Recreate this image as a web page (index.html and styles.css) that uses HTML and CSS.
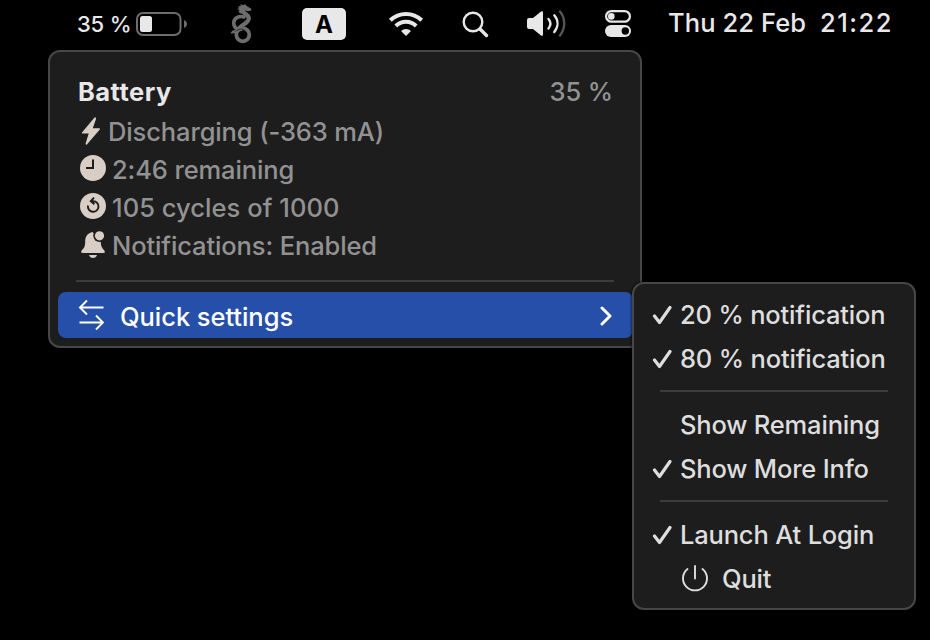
FILE: index.html
```html
<!DOCTYPE html>
<html lang="en">
<head>
<meta charset="utf-8">
<title>Battery</title>
<link rel="stylesheet" href="styles.css">
</head>
<body>
<header class="menubar">
  <span class="percent">35 %</span>
  <svg class="battery" viewBox="0 0 54 26"><rect x="2" y="1" width="43.5" height="22" rx="6" fill="none" stroke="#6d6d6d" stroke-width="2"/><rect x="5" y="4" width="12" height="16" rx="2.5" fill="#e8e8e8"/><path d="M49 8v8c4-1.500 4-6.500 0-8z" fill="#6d6d6d"/></svg>
  <svg class="dragon" viewBox="0 0 24 42"><g fill="none" stroke="#6d6d6d" stroke-linecap="round"><path d="M13 6c-3 4 6 4.500 5.800 9.500C18.500 20 12 21.500 8.500 26" stroke-width="4.200"/><path d="M14 14C9 12.500 3.700 15 3.700 20c0 4.500 3.300 6.300 7 6.500" stroke-width="3.600"/><circle cx="12.800" cy="31.800" r="6.500" stroke-width="3.800"/></g><path d="M8 3.500l3-.5-1-1.800 3.500.8 2-.8.8 1.500L21 5.500l.3 2-3.300.8-3-.8-1 2-4 1-1.500-2 1-1.500-2.500-1 2-.7zM.3 30.500l2-2.700 5-1.500-2.500 4z" fill="#6d6d6d"/><path d="M5.500 28.500c3-3 7-2.800 9.500-1" fill="none" stroke="#111" stroke-width=".7"/></svg>
  <span class="input-source">A</span>
  <svg class="wifi" viewBox="0 0 36 28"><g fill="none" stroke="#e8e8e8" stroke-width="4"><path d="M2.300 10.300a22.500 22.500 0 0 1 31.400 0"/><path d="M7.800 16a14.500 14.500 0 0 1 20.400 0"/></g><path d="M18 26l-5-5a7.400 7.400 0 0 1 10 0z" fill="#e8e8e8"/></svg>
  <svg class="search" viewBox="0 0 28 28"><circle cx="11" cy="11" r="9.300" fill="none" stroke="#e8e8e8" stroke-width="2.400"/><path d="M18 18l6.500 6.500" stroke="#e8e8e8" stroke-width="3.400" stroke-linecap="round"/></svg>
  <svg class="volume" viewBox="0 0 40 28"><path d="M1 10q0-2 2-2h4l8-6.500q2-1 2 1v22q0 2-2 1L7 19H3q-2 0-2-2z" fill="#e8e8e8"/><g fill="none" stroke-width="2.400" stroke-linecap="round"><path d="M22.500 9c2.400 3 2.400 6.500 0 9.500M28.300 5.300c4.200 5 4.200 11.500 0 16.700" stroke="#e8e8e8"/><path d="M34 1.500c5.600 7 5.600 17 0 24" stroke="#555"/></g></svg>
  <svg class="controls" viewBox="0 0 28 28"><rect x="2.100" y="2.100" width="23.800" height="10.600" rx="5.300" fill="none" stroke="#e8e8e8" stroke-width="2.200"/><circle cx="7.300" cy="7.400" r="3.300" fill="#e8e8e8"/><rect x="1" y="16" width="26" height="12" rx="6" fill="#e8e8e8"/><circle cx="21.300" cy="22" r="3.700" fill="#000"/></svg>
  <time class="clock"><span class="date">Thu 22 Feb</span><span class="time">21:22</span></time>
</header>
<main class="panel">
  <div class="title"><strong>Battery</strong><span class="level">35 %</span></div>
  <ul class="info">
    <li><svg class="bolt" viewBox="0 0 28 32"><path d="M14.500 1.500L2 16.500q-.5 1 .5 1h6.200L5.600 27.500q0 2 1.500.7L19.800 13.500q.6-1.300-.6-1.300h-6.400L16 3q0-2.600-1.500-1.500z" fill="#d8cec6"/></svg><span>Discharging (-363 mA)</span></li>
    <li><svg viewBox="0 0 32 32"><circle cx="13" cy="14" r="13" fill="#d8cec6"/><path d="M13 5.500V14H6" fill="none" stroke="#1d1d1d" stroke-width="2"/></svg><span>2:46 remaining</span></li>
    <li><svg viewBox="0 0 32 32"><circle cx="13" cy="14" r="13" fill="#d8cec6"/><path d="M8 13.500a5.300 5.300 0 1 0 5.300-4.300h-1.500M14 5.600l-3.200 3.600 3.600 3" fill="none" stroke="#1d1d1d" stroke-width="1.900"/></svg><span class="cycles">105 cycles of 1000</span></li>
    <li><svg viewBox="0 0 32 32"><path d="M12.500 2C8 3 5.200 6 5.200 11c0 6-1.200 7-3.500 9.500q-1.500 2.500 1 2.500h20.600q2.500 0 1-2.500C22 18 20.800 16 20.800 12zM9 25h8c-1 4-7 4-8 0z" fill="#d8cec6"/><circle cx="19.500" cy="5.800" r="6.200" fill="#1d1d1d"/><circle cx="19.500" cy="5.800" r="4.600" fill="#d8cec6"/></svg><span>Notifications: Enabled</span></li>
  </ul>
  <hr>
  <div class="quick"><svg class="swap" viewBox="0 0 26 32"><path d="M25.500 9.500H2M9 2.500l-7 7 7 7M1.500 24.500H25M18 17.500l7 7-7 7" fill="none" stroke="#fff" stroke-width="1.900"/></svg><span>Quick settings</span><svg class="chevron" viewBox="0 0 12 20"><path d="M2 2l8 8-8 8" fill="none" stroke="#fff" stroke-width="3" stroke-linecap="round" stroke-linejoin="round"/></svg></div>
</main>
<nav class="submenu">
  <div class="item checked"><svg class="check" viewBox="0 0 20 20"><path d="M2.500 11l5 6.500L18 2.500" /></svg><span>20 % notification</span></div>
  <div class="item checked"><svg class="check" viewBox="0 0 20 20"><path d="M2.500 11l5 6.500L18 2.500" /></svg><span>80 % notification</span></div>
  <hr>
  <div class="item"><span>Show Remaining</span></div>
  <div class="item checked"><svg class="check" viewBox="0 0 20 20"><path d="M2.500 11l5 6.500L18 2.500" /></svg><span>Show More Info</span></div>
  <hr>
  <div class="item checked"><svg class="check" viewBox="0 0 20 20"><path d="M2.500 11l5 6.500L18 2.500" /></svg><span>Launch At Login</span></div>
  <div class="item"><svg class="power" viewBox="0 0 28 28"><path d="M6.500 4a12 12 0 1 0 15 0M14 1v12.500" fill="none" stroke="#dedede" stroke-width="1.900" stroke-linecap="round"/></svg><span>Quit</span></div>
</nav>
</body>
</html>
```
FILE: styles.css
```css
* { box-sizing: border-box; }
body {
  margin: 0;
  width: 930px;
  height: 640px;
  overflow: hidden;
  position: relative;
  background: #000;
  color: #dedede;
  font: 500 25.5px/38px Inter, "Liberation Sans", sans-serif;
  letter-spacing: -.12px;
  white-space: nowrap;
}
svg { display: block; flex: none; }
.menubar { display: flex; align-items: center; height: 48px; padding-left: 77px; color: #e8e8e8; }
.percent { width: 58px; font-size: 22px; letter-spacing: -.2px; }
.battery { width: 54px; height: 26px; margin-top: 2px; }
.dragon { width: 24px; height: 42px; margin-left: 41px; }
.input-source { width: 44px; height: 32px; margin-left: 48px; border-radius: 5px; background: #e8e8e8; color: #000; font-size: 24px; font-weight: 700; line-height: 33px; text-align: center; }
.wifi { width: 36px; height: 28px; margin-left: 42px; }
.search { width: 28px; height: 28px; margin: 2px 0 0 38px; }
.volume { width: 40px; height: 28px; margin-left: 36px; }
.controls { width: 28px; height: 28px; margin: -2px 0 0 38px; }
.clock { display: flex; margin-left: 36px; line-height: 46px; height: 48px; }
.date { width: 152px; letter-spacing: .1px; }
.time { letter-spacing: 1.5px; }
.panel { width: 594px; height: 298px; margin: 2px 0 0 48px; padding: 21px 8px 0; border: 2px solid #474747; border-radius: 12px; background: #1d1d1d; }
.title { display: flex; justify-content: space-between; padding: 0 19px 0 20px; color: #e8e8e8; height: 38px; }
.title strong { font-weight: 650; letter-spacing: .45px; }
.level, .info { color: #929292; }
.info { list-style: none; margin: 0; padding: 2px 20px 0 22px; }
.info li { display: flex; align-items: center; height: 38px; }
.info svg { width: 32px; height: 32px; }
.info .bolt { width: 28px; }
.cycles { letter-spacing: .05px; }
hr { margin: 0; border: 0; height: 2px; background: #3c3c3c; }
.panel hr { margin: 15px 18px 10px; }
.quick { display: flex; align-items: center; height: 46px; margin-right: -1px; padding: 3px 21px 0 20px; border-radius: 8px; background: #264fa9; color: #fff; letter-spacing: -.05px; }
.swap { width: 26px; height: 32px; margin: -5px 16px 0 0; }
.chevron { width: 12px; height: 20px; margin: -1px 0 0 auto; }
.submenu { position: absolute; left: 632px; top: 282px; width: 284px; height: 328px; padding: 9px 18px 0; border: 2px solid #474747; border-radius: 12px; background: #1d1d1d; box-shadow: 0 0 3px #000; letter-spacing: -.18px; }
.submenu hr { margin: 9px 8px 11px; }
.item { display: flex; align-items: center; height: 44px; padding-left: 28px; }
.item.checked { padding-left: 0; }
.check { width: 20px; height: 20px; margin-right: 8px; fill: none; stroke: #dedede; stroke-width: 3.2; stroke-linecap: round; stroke-linejoin: round; }
.power { width: 28px; height: 28px; margin: 0 13px 0 1px; }
```
